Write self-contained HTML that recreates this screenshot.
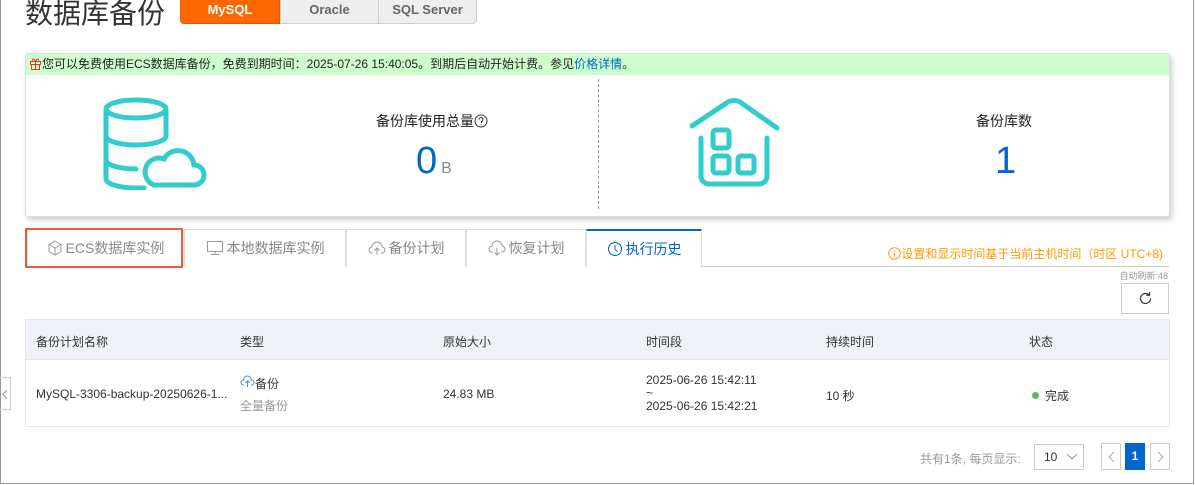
<!DOCTYPE html>
<html><head><meta charset="utf-8"><style>
*{box-sizing:border-box;margin:0;padding:0}
body{width:1195px;height:485px;overflow:hidden;background:#fff;font-family:"Liberation Sans","Noto Sans CJK SC",sans-serif;font-size:12px;color:#333;position:relative}
.frame{position:absolute;left:0;top:-2px;width:1194px;height:486px;border:1px solid #999;}
.abs{position:absolute}
.title{left:25px;top:-8px;font-size:28px;color:#333;}
.mt{top:0;height:24px;line-height:20px;text-align:center;font-weight:bold;font-size:13px;border:1px solid #ccc;border-top:none;background:#eee;color:#666}
.card{left:25px;top:53px;width:1145px;height:164px;border:1px solid #ddd;border-radius:3px;box-shadow:2px 3px 6px rgba(0,0,0,.2);background:#fff;overflow:hidden}
.banner{height:21px;background:#ccffcc;line-height:21px;font-size:12px;color:#222;padding-left:3px}
.tab{top:229px;height:38px;border:1px solid #ddd;border-bottom:none;line-height:36px;text-align:center;color:#888;font-size:14px;background:#fff}
.tab svg{vertical-align:-3px;margin-right:3px}
.td{font-size:12px;color:#333}
.pg{border:1px solid #ccc;background:#fff;text-align:center;color:#aaa}
</style></head><body>
<div class="frame"></div>
<div class="abs title">数据库备份</div>
<div class="abs mt" style="left:180px;width:100px;background:#f60;color:#fff;border-color:#e55a00;border-radius:0 0 0 4px">MySQL</div>
<div class="abs mt" style="left:280px;width:99px">Oracle</div>
<div class="abs mt" style="left:378px;width:99px;border-radius:0 0 4px 0">SQL Server</div>

<div class="abs card">
<div class="banner"><svg width="13" height="13" viewBox="0 0 13 13" fill="none" stroke="#e33" stroke-width="1" style="vertical-align:-2px"><rect x="1.5" y="4.5" width="10" height="3"/><rect x="2.5" y="7.5" width="8" height="5"/><path d="M6.5 4.5v8M6.5 4.5c-1-3-4-3-3-1M6.5 4.5c1-3 4-3 3-1"/></svg>您可以免费使用ECS数据库备份，免费到期时间：2025-07-26 15:40:05。到期后自动开始计费。参见<span style="color:#06c">价格详情</span>。</div>
<div class="abs" style="left:572px;top:25px;height:130px;border-left:1px dashed #999"></div>
<svg class="abs" style="left:72px;top:42px" width="112" height="94" viewBox="0 0 112 94" fill="none" stroke="#33cccc" stroke-width="5" stroke-linecap="round">
<ellipse cx="38" cy="13" rx="30" ry="9"/>
<path d="M8 13v70c0 5 14 9 30 9h8M68 13v26M8 40c0 5 14 9 30 9s30-4 30-9M8 64c0 5 14 9 30 9"/>
<path d="M56 89h40a10 10 0 0 0 0-20a16 16 0 0 0-30-6a12 12 0 0 0-10 26z" fill="#fff"/>
</svg>
<div class="abs" style="left:350px;top:57px;font-size:14px;color:#222">备份库使用总量<svg width="14" height="14" viewBox="0 0 14 14" fill="none" stroke="#333" style="vertical-align:-2px"><circle cx="7" cy="7" r="6"/><path d="M5 5.5a2 2 0 1 1 2.5 2v1.5M7 10.5v1"/></svg></div>
<div class="abs" style="left:390px;top:86px;font-size:38px;color:#0066cc;font-weight:300">0<span style="font-size:16px;color:#888;margin-left:4px">B</span></div>
<svg class="abs" style="left:662px;top:44px" width="92" height="90" viewBox="0 0 92 90" fill="none" stroke="#33cccc" stroke-width="5" stroke-linecap="round" stroke-linejoin="round">
<path d="M4 28L40 4q6-3 12 0l37 26"/>
<path d="M13 40v38a8 8 0 0 0 8 8h50a8 8 0 0 0 8-8V40"/>
<rect x="25" y="32" width="16" height="18" rx="3"/><rect x="25" y="58" width="16" height="17" rx="3"/><rect x="50" y="58" width="16" height="17" rx="3"/>
</svg>
<div class="abs" style="left:950px;top:57px;font-size:14px;color:#222">备份库数</div>
<div class="abs" style="left:969px;top:86px;font-size:38px;color:#0066cc;font-weight:300">1</div>
</div>

<div class="abs tab" style="left:27px;width:157px"><svg width="16" height="16" viewBox="0 0 16 16" fill="none" stroke="#999"><path d="M8 1l6 3.5v7L8 15l-6-3.5v-7zM2 4.5L8 8l6-3.5M8 8v7"/></svg>ECS数据库实例</div>
<div class="abs" style="left:25px;top:228px;width:158px;height:40px;border:2px solid #f05a3c"></div>
<div class="abs tab" style="left:184px;width:162px"><svg width="18" height="16" viewBox="0 0 18 16" fill="none" stroke="#999"><rect x="1.5" y="1.5" width="15" height="10"/><path d="M9 11.5v3M5 14.5h8"/></svg>本地数据库实例</div>
<div class="abs tab" style="left:346px;width:120px"><svg width="18" height="16" viewBox="0 0 18 16" fill="none" stroke="#999"><path d="M5 13H4a3 3 0 0 1 0-6a5 5 0 0 1 10 0a3 3 0 0 1 0 6h-1M9 15V8M6.5 10.5L9 8l2.5 2.5"/></svg>备份计划</div>
<div class="abs tab" style="left:466px;width:120px"><svg width="18" height="16" viewBox="0 0 18 16" fill="none" stroke="#999"><path d="M5 12H4a3 3 0 0 1 0-6a5 5 0 0 1 10 0a3 3 0 0 1 0 6h-1M9 8v7M6.5 12.5L9 15l2.5-2.5"/></svg>恢复计划</div>
<div class="abs tab" style="left:586px;width:116px;color:#06c;border-top:2px solid #06c;height:39px"><svg width="16" height="16" viewBox="0 0 16 16" fill="none" stroke="#06c"><circle cx="8" cy="8" r="6.5"/><path d="M8 4v4.5l2.5 2"/></svg>执行历史</div>
<div class="abs" style="left:702px;top:266px;width:467px;border-top:1px solid #ccc"></div>
<div class="abs" style="right:32px;top:245px;color:#f90;font-size:12px"><svg width="13" height="13" viewBox="0 0 13 13" fill="none" stroke="#f90" style="vertical-align:-2px"><circle cx="6.5" cy="6.5" r="5.8"/><path d="M6.5 5.5v4M6.5 3.2v1"/></svg>设置和显示时间基于当前主机时间（时区 UTC+8)</div>
<div class="abs" style="right:27px;top:269px;color:#999;font-size:9px">自动刷新:48</div>
<div class="abs" style="left:1121px;top:283px;width:48px;height:31px;border:1px solid #ccc;text-align:center;padding-top:7px"><svg width="15" height="15" viewBox="0 0 15 15" fill="none" stroke="#333" stroke-width="1.2"><path d="M12.5 7.5a5 5 0 1 1-1.5-3.6M11.5 1v3.3H8.2"/></svg></div>

<div class="abs" style="left:25px;top:319px;width:1145px;height:108px;border:1px solid #e5e5e5"></div>
<div class="abs" style="left:26px;top:320px;width:1143px;height:40px;background:#eef1f5;border-bottom:1px solid #e5e5e5"></div>
<div class="abs td" style="left:36px;top:333px">备份计划名称</div>
<div class="abs td" style="left:240px;top:333px">类型</div>
<div class="abs td" style="left:443px;top:333px">原始大小</div>
<div class="abs td" style="left:646px;top:333px">时间段</div>
<div class="abs td" style="left:826px;top:333px">持续时间</div>
<div class="abs td" style="left:1029px;top:333px">状态</div>
<div class="abs td" style="left:36px;top:387px">MySQL-3306-backup-20250626-1...</div>
<div class="abs td" style="left:240px;top:375px"><svg width="15" height="13" viewBox="0 0 15 13" fill="none" stroke="#4a90e2"><path d="M4 10H3.5a2.5 2.5 0 0 1 0-5a4 4 0 0 1 8 0a2.5 2.5 0 0 1 0 5H11M7.5 12V6M5.5 8l2-2 2 2"/></svg>备份</div>
<div class="abs td" style="left:240px;top:397px;color:#999">全量备份</div>
<div class="abs td" style="left:443px;top:387px">24.83 MB</div>
<div class="abs td" style="left:646px;top:374px;line-height:13px">2025-06-26 15:42:11<br>~<br>2025-06-26 15:42:21</div>
<div class="abs td" style="left:826px;top:387px">10 秒</div>
<div class="abs td" style="left:1032px;top:387px"><span style="display:inline-block;width:7px;height:7px;border-radius:50%;background:#5cb85c;margin-right:6px;vertical-align:1px"></span>完成</div>
<div class="abs" style="left:0;top:377px;width:11px;height:33px;border:1px solid #ccc;border-left:none;padding:11px 0 0 2px"><svg width="6" height="11" viewBox="0 0 6 11" fill="none" stroke="#999"><path d="M5 1L1 5.5 5 10"/></svg></div>

<div class="abs" style="left:920px;top:450px;color:#999;font-size:12px">共有1条, 每页显示:</div>
<div class="abs pg" style="left:1034px;top:444px;width:50px;height:26px;color:#333;line-height:24px;text-align:left;padding-left:9px">10 <svg width="12" height="7" viewBox="0 0 12 7" fill="none" stroke="#999" style="margin-left:5px;vertical-align:1px"><path d="M1 1l5 5 5-5"/></svg></div>
<div class="abs pg" style="left:1101px;top:443px;width:20px;height:27px;padding-top:7px"><svg width="7" height="12" viewBox="0 0 7 12" fill="none" stroke="#aaa"><path d="M6 1L1 6l5 5"/></svg></div>
<div class="abs" style="left:1125px;top:443px;width:20px;height:27px;background:#06c;color:#fff;text-align:center;line-height:27px;font-weight:bold">1</div>
<div class="abs pg" style="left:1150px;top:443px;width:20px;height:27px;padding-top:7px"><svg width="7" height="12" viewBox="0 0 7 12" fill="none" stroke="#aaa"><path d="M1 1l5 5-5 5"/></svg></div>
</body></html>
